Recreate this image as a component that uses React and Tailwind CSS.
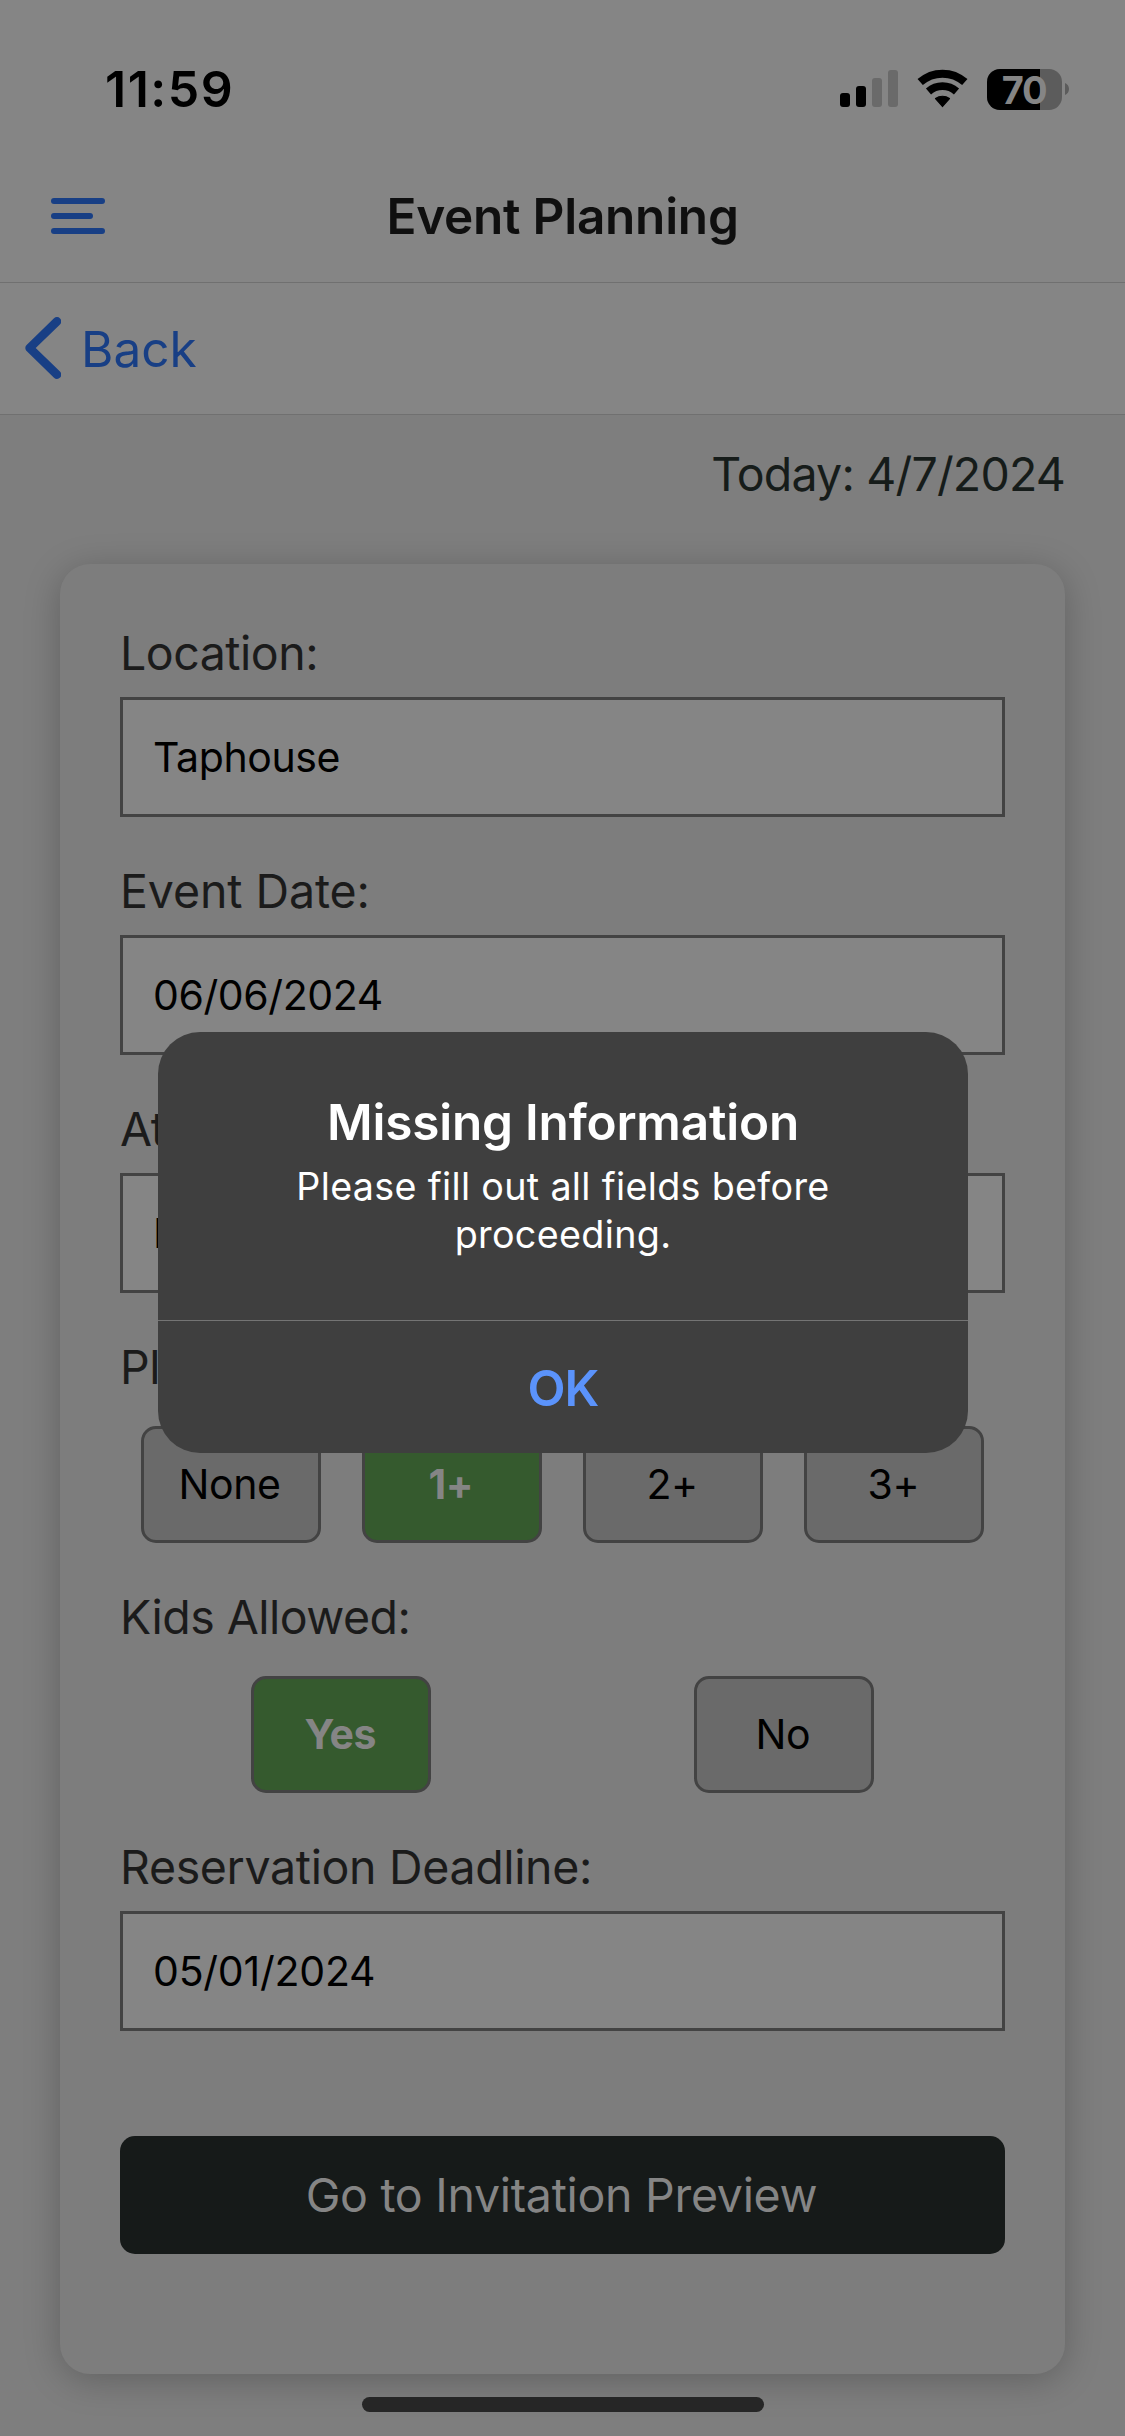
import React from "react";

function SignalIcon() {
  return (
    <svg width="58" height="42" viewBox="0 0 58 42">
      <rect x="0" y="25" width="10" height="14" rx="3" fill="#000" />
      <rect x="16" y="18" width="10" height="21" rx="3" fill="#000" />
      <rect x="32" y="10" width="10" height="29" rx="3" fill="#6a6a6a" />
      <rect x="48" y="2" width="10" height="37" rx="3" fill="#6a6a6a" />
    </svg>
  );
}

function WifiIcon() {
  return (
    <svg width="51" height="42" viewBox="0 0 51 42" fill="none" stroke="#000">
      <path d="M3.2 14.1A33.6 33.6 0 0 1 47.8 14.1" strokeWidth="8" />
      <path d="M11.5 23.5A21.1 21.1 0 0 1 39.5 23.5" strokeWidth="7.7" />
      <path
        d="M25.5 38.4L18.6 30.6A11.8 11.8 0 0 1 32.4 30.6Z"
        fill="#000"
        strokeWidth="1.4"
        strokeLinejoin="round"
      />
    </svg>
  );
}

function Battery() {
  return (
    <div className="flex items-center">
      <div className="relative h-[41px] w-[75px] rounded-[13px] bg-[#5c5c5c]">
        <div className="h-full w-[53px] rounded-l-[13px] bg-black" />
        <span className="absolute inset-x-0 -top-[2px] pr-[1px] text-center text-[38px] leading-[46px] font-bold tracking-[-1.2px] text-[#858585]">
          70
        </span>
      </div>
      <svg width="4" height="12" viewBox="0 0 4 12" className="ml-[3px]">
        <path d="M0 0C2.4 1 4 3.2 4 6S2.4 11 0 12Z" fill="#5c5c5c" />
      </svg>
    </div>
  );
}

function StatusBar() {
  return (
    <div className="flex h-[150px] items-center justify-between pt-7 pr-14 pl-[105px]">
      <span className="text-[50px] leading-[60px] font-semibold tracking-[1.5px] text-black">
        11:59
      </span>
      <div className="flex items-center gap-[19px]">
        <SignalIcon />
        <WifiIcon />
        <Battery />
      </div>
    </div>
  );
}

function Header() {
  return (
    <div className="grid h-[133px] grid-cols-[1fr_auto_1fr] items-center border-b border-[#707070]">
      <button className="ml-[51px] flex w-[54px] flex-col gap-[9px]">
        <span className="h-[6px] w-[54px] rounded-full bg-[#183f85]" />
        <span className="h-[6px] w-[42px] rounded-full bg-[#183f85]" />
        <span className="h-[6px] w-[54px] rounded-full bg-[#183f85]" />
      </button>
      <h1 className="text-[49.5px] leading-[60px] font-semibold tracking-[-0.25px] text-[#0f0f0f]">
        Event Planning
      </h1>
    </div>
  );
}

function BackBar() {
  return (
    <div className="flex h-[132px] items-center border-b border-[#707070] pl-[25px]">
      <svg width="36" height="64" viewBox="0 0 36 64" fill="none">
        <path
          d="M32 4.4L4.6 31L32 57.6"
          stroke="#183f85"
          strokeWidth="8.6"
          strokeLinecap="round"
          strokeLinejoin="round"
        />
      </svg>
      <span className="ml-5 text-[49.5px] leading-[60px] text-[#183f85]">Back</span>
    </div>
  );
}

function Label({ children, tracking = "tracking-[-0.35px]" }) {
  return (
    <div className={`text-[46.5px] leading-[58px] text-[#1b1b1b] ${tracking}`}>
      {children}
    </div>
  );
}

function TextField({ label, tracking, value, valueTracking = "tracking-[-0.4px]" }) {
  return (
    <div>
      <Label tracking={tracking}>{label}</Label>
      <div
        className={`mt-[15px] flex h-[120px] items-center border-[3px] border-[#434343] bg-[#858585] pt-[2px] pl-[30px] text-[41px] text-black ${valueTracking}`}
      >
        {value}
      </div>
    </div>
  );
}

function ChoiceField({ label, tracking, options, selected }) {
  return (
    <div>
      <Label tracking={tracking}>{label}</Label>
      <div className="mt-[30px] flex justify-around">
        {options.map((option) => (
          <button
            key={option}
            className={`h-[117px] w-[180px] rounded-[15px] border-[3px] border-[#434343] pr-[2px] pb-[2px] text-[41px] leading-[50px] tracking-[-0.4px] ${
              option === selected
                ? "bg-[#355a2e] font-bold text-[#858585]"
                : "bg-[#6a6a6a] text-black"
            }`}
          >
            {option}
          </button>
        ))}
      </div>
    </div>
  );
}

function Alert() {
  return (
    <div className="absolute inset-0 flex items-start justify-center pt-[1032px] pl-px">
      <div
        role="alertdialog"
        className="w-[810px] overflow-hidden rounded-[42px] bg-[#3f3f3f] text-center text-white"
      >
        <div className="px-12 pt-[60px] pb-[62px]">
          <h2 className="text-[49.5px] leading-[60px] font-semibold tracking-[-0.2px]">
            Missing Information
          </h2>
          <p className="mt-[10px] text-[37.7px] leading-[48px] tracking-[0.32px]">
            Please fill out all fields before
            <br />
            proceeding.
          </p>
        </div>
        <button className="h-[133px] w-full border-t border-[#747474] pt-px text-[49.5px] leading-[60px] font-semibold tracking-[-1px] text-[#5b93fb]">
          OK
        </button>
      </div>
    </div>
  );
}

export default function App() {
  return (
    <div className="relative h-[2436px] w-[1125px] overflow-hidden bg-[#7e7e7e] font-['Inter',sans-serif]">
      <div className="bg-[#858585]">
        <StatusBar />
        <Header />
        <BackBar />
      </div>

      <div className="pt-[30px] pr-[60px] text-right text-[46.5px] leading-[58px] tracking-[-0.81px] text-[#161c1a]">
        Today: 4/7/2024
      </div>

      <div className="mx-[60px] mt-[61px] flex h-[1810px] flex-col gap-[45px] rounded-[30px] bg-[#7d7d7d] px-[60px] pt-[60px] shadow-[0_6px_36px_rgba(0,0,0,0.23)]">
        <TextField label="Location:" tracking="tracking-[-0.5px]" value="Taphouse" />
        <TextField label="Event Date:" tracking="tracking-[-0.1px]" value="06/06/2024" />
        <TextField label="Attire:" value="Formal" />
        <ChoiceField label="Plus Ones:" options={["None", "1+", "2+", "3+"]} selected="1+" />
        <ChoiceField
          label="Kids Allowed:"
          tracking="tracking-[-0.52px]"
          options={["Yes", "No"]}
          selected="Yes"
        />
        <TextField
          label="Reservation Deadline:"
          value="05/01/2024"
          valueTracking="tracking-[-0.23px]"
        />
        <button className="mt-[60px] h-[118px] rounded-[15px] bg-[#161a19] pr-[2px] text-[46.5px] leading-[58px] tracking-[-0.3px] text-[#858585]">
          Go to Invitation Preview
        </button>
      </div>

      <div className="mx-auto mt-[23px] h-[15px] w-[402px] rounded-full bg-[#262626]" />

      <Alert />
    </div>
  );
}
